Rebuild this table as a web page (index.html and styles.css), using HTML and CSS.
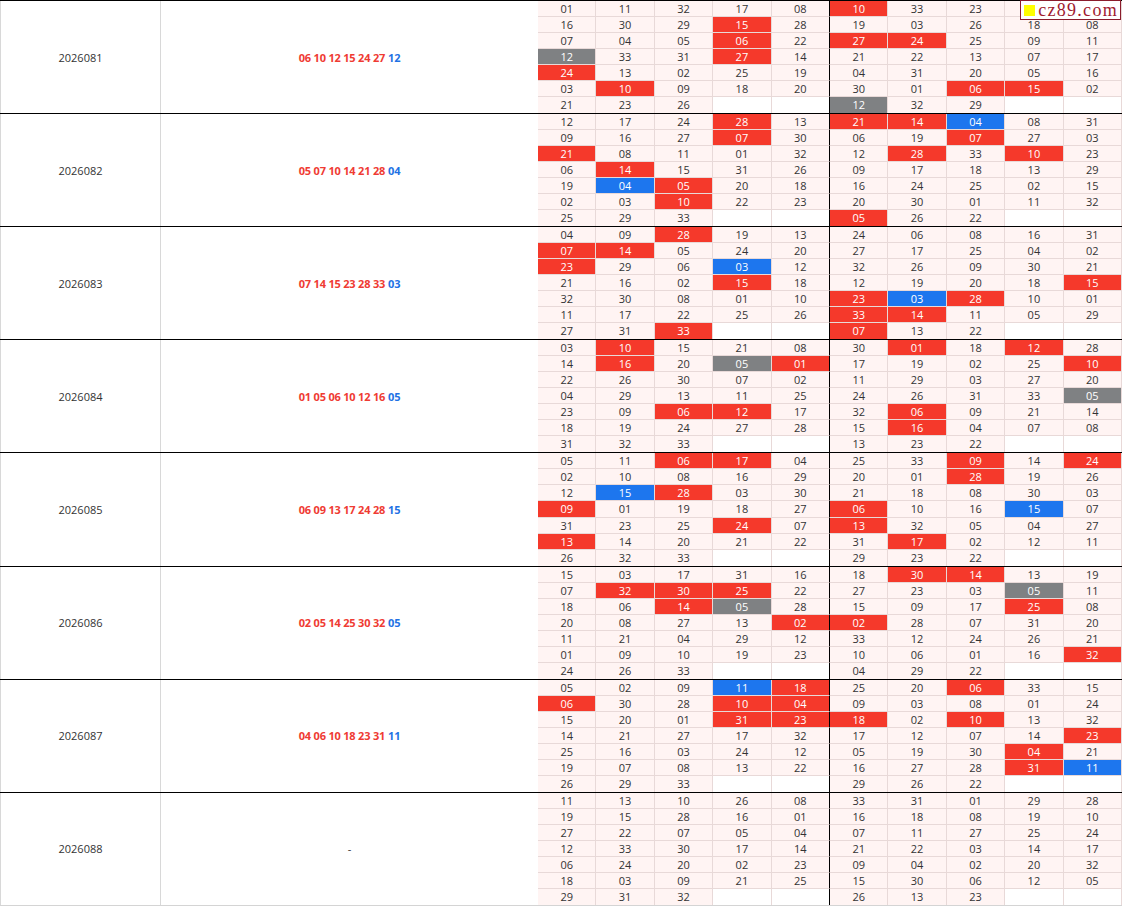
FILE: index.html
```html
<!DOCTYPE html>
<html lang="zh">
<head>
<meta charset="utf-8">
<title>cz89.com</title>
<link rel="stylesheet" href="styles.css">
</head>
<body>
<div class="board">
  <div class="logo"><span class="sq"></span><span class="brand">cz89.com</span></div>

  <div class="grp">
    <div class="issue">2026081</div>
    <div class="res"><span class="red">06 10 12 15 24 27</span> <span class="blue">12</span></div>
    <div class="nums">
      <span>01</span><span>11</span><span>32</span><span>17</span><span>08</span><span class="r">10</span><span>33</span><span>23</span><span></span><span></span>
      <span>16</span><span>30</span><span>29</span><span class="r">15</span><span>28</span><span>19</span><span>03</span><span>26</span><span>18</span><span>08</span>
      <span>07</span><span>04</span><span>05</span><span class="r">06</span><span>22</span><span class="r">27</span><span class="r">24</span><span>25</span><span>09</span><span>11</span>
      <span class="g">12</span><span>33</span><span>31</span><span class="r">27</span><span>14</span><span>21</span><span>22</span><span>13</span><span>07</span><span>17</span>
      <span class="r">24</span><span>13</span><span>02</span><span>25</span><span>19</span><span>04</span><span>31</span><span>20</span><span>05</span><span>16</span>
      <span>03</span><span class="r">10</span><span>09</span><span>18</span><span>20</span><span>30</span><span>01</span><span class="r">06</span><span class="r">15</span><span>02</span>
      <span>21</span><span>23</span><span>26</span><span class="e"></span><span class="e"></span><span class="g">12</span><span>32</span><span>29</span><span class="e"></span><span class="e"></span>
    </div>
  </div>

  <div class="grp">
    <div class="issue">2026082</div>
    <div class="res"><span class="red">05 07 10 14 21 28</span> <span class="blue">04</span></div>
    <div class="nums">
      <span>12</span><span>17</span><span>24</span><span class="r">28</span><span>13</span><span class="r">21</span><span class="r">14</span><span class="b">04</span><span>08</span><span>31</span>
      <span>09</span><span>16</span><span>27</span><span class="r">07</span><span>30</span><span>06</span><span>19</span><span class="r">07</span><span>27</span><span>03</span>
      <span class="r">21</span><span>08</span><span>11</span><span>01</span><span>32</span><span>12</span><span class="r">28</span><span>33</span><span class="r">10</span><span>23</span>
      <span>06</span><span class="r">14</span><span>15</span><span>31</span><span>26</span><span>09</span><span>17</span><span>18</span><span>13</span><span>29</span>
      <span>19</span><span class="b">04</span><span class="r">05</span><span>20</span><span>18</span><span>16</span><span>24</span><span>25</span><span>02</span><span>15</span>
      <span>02</span><span>03</span><span class="r">10</span><span>22</span><span>23</span><span>20</span><span>30</span><span>01</span><span>11</span><span>32</span>
      <span>25</span><span>29</span><span>33</span><span class="e"></span><span class="e"></span><span class="r">05</span><span>26</span><span>22</span><span class="e"></span><span class="e"></span>
    </div>
  </div>

  <div class="grp">
    <div class="issue">2026083</div>
    <div class="res"><span class="red">07 14 15 23 28 33</span> <span class="blue">03</span></div>
    <div class="nums">
      <span>04</span><span>09</span><span class="r">28</span><span>19</span><span>13</span><span>24</span><span>06</span><span>08</span><span>16</span><span>31</span>
      <span class="r">07</span><span class="r">14</span><span>05</span><span>24</span><span>20</span><span>27</span><span>17</span><span>25</span><span>04</span><span>02</span>
      <span class="r">23</span><span>29</span><span>06</span><span class="b">03</span><span>12</span><span>32</span><span>26</span><span>09</span><span>30</span><span>21</span>
      <span>21</span><span>16</span><span>02</span><span class="r">15</span><span>18</span><span>12</span><span>19</span><span>20</span><span>18</span><span class="r">15</span>
      <span>32</span><span>30</span><span>08</span><span>01</span><span>10</span><span class="r">23</span><span class="b">03</span><span class="r">28</span><span>10</span><span>01</span>
      <span>11</span><span>17</span><span>22</span><span>25</span><span>26</span><span class="r">33</span><span class="r">14</span><span>11</span><span>05</span><span>29</span>
      <span>27</span><span>31</span><span class="r">33</span><span class="e"></span><span class="e"></span><span class="r">07</span><span>13</span><span>22</span><span class="e"></span><span class="e"></span>
    </div>
  </div>

  <div class="grp">
    <div class="issue">2026084</div>
    <div class="res"><span class="red">01 05 06 10 12 16</span> <span class="blue">05</span></div>
    <div class="nums">
      <span>03</span><span class="r">10</span><span>15</span><span>21</span><span>08</span><span>30</span><span class="r">01</span><span>18</span><span class="r">12</span><span>28</span>
      <span>14</span><span class="r">16</span><span>20</span><span class="g">05</span><span class="r">01</span><span>17</span><span>19</span><span>02</span><span>25</span><span class="r">10</span>
      <span>22</span><span>26</span><span>30</span><span>07</span><span>02</span><span>11</span><span>29</span><span>03</span><span>27</span><span>20</span>
      <span>04</span><span>29</span><span>13</span><span>11</span><span>25</span><span>24</span><span>26</span><span>31</span><span>33</span><span class="g">05</span>
      <span>23</span><span>09</span><span class="r">06</span><span class="r">12</span><span>17</span><span>32</span><span class="r">06</span><span>09</span><span>21</span><span>14</span>
      <span>18</span><span>19</span><span>24</span><span>27</span><span>28</span><span>15</span><span class="r">16</span><span>04</span><span>07</span><span>08</span>
      <span>31</span><span>32</span><span>33</span><span class="e"></span><span class="e"></span><span>13</span><span>23</span><span>22</span><span class="e"></span><span class="e"></span>
    </div>
  </div>

  <div class="grp">
    <div class="issue">2026085</div>
    <div class="res"><span class="red">06 09 13 17 24 28</span> <span class="blue">15</span></div>
    <div class="nums">
      <span>05</span><span>11</span><span class="r">06</span><span class="r">17</span><span>04</span><span>25</span><span>33</span><span class="r">09</span><span>14</span><span class="r">24</span>
      <span>02</span><span>10</span><span>08</span><span>16</span><span>29</span><span>20</span><span>01</span><span class="r">28</span><span>19</span><span>26</span>
      <span>12</span><span class="b">15</span><span class="r">28</span><span>03</span><span>30</span><span>21</span><span>18</span><span>08</span><span>30</span><span>03</span>
      <span class="r">09</span><span>01</span><span>19</span><span>18</span><span>27</span><span class="r">06</span><span>10</span><span>16</span><span class="b">15</span><span>07</span>
      <span>31</span><span>23</span><span>25</span><span class="r">24</span><span>07</span><span class="r">13</span><span>32</span><span>05</span><span>04</span><span>27</span>
      <span class="r">13</span><span>14</span><span>20</span><span>21</span><span>22</span><span>31</span><span class="r">17</span><span>02</span><span>12</span><span>11</span>
      <span>26</span><span>32</span><span>33</span><span class="e"></span><span class="e"></span><span>29</span><span>23</span><span>22</span><span class="e"></span><span class="e"></span>
    </div>
  </div>

  <div class="grp">
    <div class="issue">2026086</div>
    <div class="res"><span class="red">02 05 14 25 30 32</span> <span class="blue">05</span></div>
    <div class="nums">
      <span>15</span><span>03</span><span>17</span><span>31</span><span>16</span><span>18</span><span class="r">30</span><span class="r">14</span><span>13</span><span>19</span>
      <span>07</span><span class="r">32</span><span class="r">30</span><span class="r">25</span><span>22</span><span>27</span><span>23</span><span>03</span><span class="g">05</span><span>11</span>
      <span>18</span><span>06</span><span class="r">14</span><span class="g">05</span><span>28</span><span>15</span><span>09</span><span>17</span><span class="r">25</span><span>08</span>
      <span>20</span><span>08</span><span>27</span><span>13</span><span class="r">02</span><span class="r">02</span><span>28</span><span>07</span><span>31</span><span>20</span>
      <span>11</span><span>21</span><span>04</span><span>29</span><span>12</span><span>33</span><span>12</span><span>24</span><span>26</span><span>21</span>
      <span>01</span><span>09</span><span>10</span><span>19</span><span>23</span><span>10</span><span>06</span><span>01</span><span>16</span><span class="r">32</span>
      <span>24</span><span>26</span><span>33</span><span class="e"></span><span class="e"></span><span>04</span><span>29</span><span>22</span><span class="e"></span><span class="e"></span>
    </div>
  </div>

  <div class="grp">
    <div class="issue">2026087</div>
    <div class="res"><span class="red">04 06 10 18 23 31</span> <span class="blue">11</span></div>
    <div class="nums">
      <span>05</span><span>02</span><span>09</span><span class="b">11</span><span class="r">18</span><span>25</span><span>20</span><span class="r">06</span><span>33</span><span>15</span>
      <span class="r">06</span><span>30</span><span>28</span><span class="r">10</span><span class="r">04</span><span>09</span><span>03</span><span>08</span><span>01</span><span>24</span>
      <span>15</span><span>20</span><span>01</span><span class="r">31</span><span class="r">23</span><span class="r">18</span><span>02</span><span class="r">10</span><span>13</span><span>32</span>
      <span>14</span><span>21</span><span>27</span><span>17</span><span>32</span><span>17</span><span>12</span><span>07</span><span>14</span><span class="r">23</span>
      <span>25</span><span>16</span><span>03</span><span>24</span><span>12</span><span>05</span><span>19</span><span>30</span><span class="r">04</span><span>21</span>
      <span>19</span><span>07</span><span>08</span><span>13</span><span>22</span><span>16</span><span>27</span><span>28</span><span class="r">31</span><span class="b">11</span>
      <span>26</span><span>29</span><span>33</span><span class="e"></span><span class="e"></span><span>29</span><span>26</span><span>22</span><span class="e"></span><span class="e"></span>
    </div>
  </div>

  <div class="grp">
    <div class="issue">2026088</div>
    <div class="res"><span class="dash">-</span></div>
    <div class="nums">
      <span>11</span><span>13</span><span>10</span><span>26</span><span>08</span><span>33</span><span>31</span><span>01</span><span>29</span><span>28</span>
      <span>19</span><span>15</span><span>28</span><span>16</span><span>01</span><span>16</span><span>18</span><span>08</span><span>19</span><span>10</span>
      <span>27</span><span>22</span><span>07</span><span>05</span><span>04</span><span>07</span><span>11</span><span>27</span><span>25</span><span>24</span>
      <span>12</span><span>33</span><span>30</span><span>17</span><span>14</span><span>21</span><span>22</span><span>03</span><span>14</span><span>17</span>
      <span>06</span><span>24</span><span>20</span><span>02</span><span>23</span><span>09</span><span>04</span><span>02</span><span>20</span><span>32</span>
      <span>18</span><span>03</span><span>09</span><span>21</span><span>25</span><span>15</span><span>30</span><span>06</span><span>12</span><span>05</span>
      <span>29</span><span>31</span><span>32</span><span class="e"></span><span class="e"></span><span>26</span><span>13</span><span>23</span><span class="e"></span><span class="e"></span>
    </div>
  </div>
</div>
</body>
</html>
```

FILE: styles.css
```css
* { box-sizing: border-box; }

body {
  margin: 0;
  background: #fff;
  font-family: "Open Sans", "Noto Sans", sans-serif;
  font-size: 11px;
  color: #333;
}

.board {
  position: relative;
  width: 1122px;
  border-bottom: 1px solid #d4d4d4;
}

.grp {
  display: grid;
  grid-template-columns: 161px 377px 1fr;
  border-top: 1px solid #000;
}

.issue {
  display: flex;
  align-items: center;
  justify-content: center;
  border-left: 1px solid #d8d8d8;
  border-right: 1px solid #d8d8d8;
  color: #333;
}

.res {
  display: flex;
  align-items: center;
  justify-content: center;
  gap: 3px;
  font-weight: bold;
  letter-spacing: -0.2px;
}

.res .red { color: #ef3b33; }
.res .blue { color: #1f72e4; }
.res .dash { font-weight: normal; color: #333; }

.nums {
  display: grid;
  grid-template-columns: repeat(10, 1fr);
  grid-auto-rows: 16.03px;
}

.nums span {
  background: #fff4f3;
  border-right: 1px solid #e8d9d8;
  border-bottom: 1px solid #e8d9d8;
  text-align: center;
  line-height: 15px;
}

.nums span:nth-child(10n+5) {
  border-right-color: #000;
}

.nums span:nth-child(n+61) {
  border-bottom: 0;
  line-height: 16px;
}

.nums .e { background: #fff; }
.nums .r { background: #f5392b; color: #fff; }
.nums .b { background: #1d76ee; color: #fff; }
.nums .g { background: #7f8183; color: #fff; }

.logo {
  position: absolute;
  top: 0;
  right: 1px;
  height: 20px;
  display: flex;
  align-items: center;
  gap: 3px;
  padding: 0 2px 0 3px;
  background: #fff;
  border: 1px solid #8a1c2c;
}

.logo .sq {
  width: 11px;
  height: 11px;
  background: #ffff00;
}

.logo .brand {
  font-family: "Liberation Serif", "DejaVu Serif", serif;
  font-size: 18px;
  line-height: 17px;
  letter-spacing: 1.3px;
  color: #a01a30;
}
```
